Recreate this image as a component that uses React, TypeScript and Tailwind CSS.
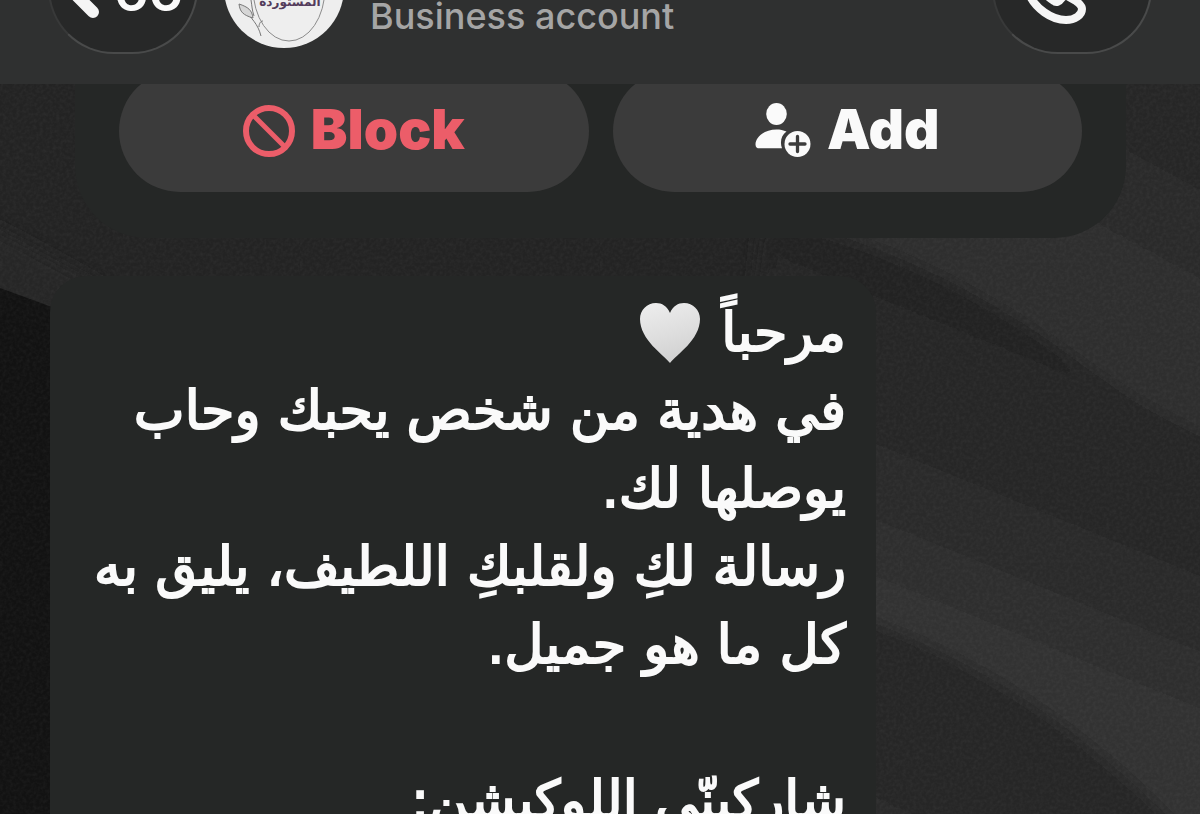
const noise =
  "url(\"data:image/svg+xml,%3Csvg xmlns='http://www.w3.org/2000/svg' width='300' height='300'%3E%3Cfilter id='n'%3E%3CfeTurbulence type='fractalNoise' baseFrequency='.3' numOctaves='2' stitchTiles='stitch'/%3E%3CfeColorMatrix values='0 0 0 0 1 0 0 0 0 1 0 0 0 0 1 .5 0 0 0 -.18'/%3E%3C/filter%3E%3Crect width='300' height='300' filter='url(%23n)'/%3E%3C/svg%3E\")";

function Wallpaper() {
  return (
    <div aria-hidden="true" className="absolute inset-0 -z-10 overflow-hidden">
      <svg className="h-full w-full" viewBox="0 0 1200 814" preserveAspectRatio="none">
        <defs>
          <linearGradient id="fold" gradientUnits="userSpaceOnUse" x1="1070" y1="350" x2="960" y2="620">
            <stop offset="0" stopColor="#242424" />
            <stop offset="0.4" stopColor="#262626" />
            <stop offset="1" stopColor="#303030" />
          </linearGradient>
          <linearGradient id="crest" gradientUnits="userSpaceOnUse" x1="1000" y1="330" x2="1130" y2="90">
            <stop offset="0" stopColor="#2f2f2f" />
            <stop offset="0.6" stopColor="#2c2c2c" />
            <stop offset="1" stopColor="#252525" />
          </linearGradient>
          <linearGradient id="valley" gradientUnits="userSpaceOnUse" x1="1040" y1="690" x2="960" y2="860">
            <stop offset="0" stopColor="#242424" />
            <stop offset="1" stopColor="#292929" />
          </linearGradient>
          <filter id="soft" filterUnits="userSpaceOnUse" x="-100" y="-100" width="1400" height="1050">
            <feGaussianBlur stdDeviation="8" />
          </filter>
        </defs>
        <rect width="1200" height="814" fill="#232323" />
        <g filter="url(#soft)">
          <path d="M-20 220C20 240 60 262 110 290V330H-20Z" fill="#282828" />
          <path d="M760 215C900 245 990 300 1070 355C1130 400 1190 430 1260 460V0H1000Z" fill="url(#crest)" />
          <path d="M760 215C900 245 990 300 1070 355C1130 400 1190 430 1260 460V900H700Z" fill="url(#fold)" />
          <path d="M820 605C960 650 1080 720 1200 850H760Z" fill="url(#valley)" />
        </g>
        <path d="M0 288L60 310V814H0Z" fill="#121212" />
      </svg>
      <div className="absolute inset-0 opacity-15" style={{ backgroundImage: noise }} />
    </div>
  );
}

function BlockIcon() {
  return (
    <svg width="52" height="52" viewBox="0 0 52 52" fill="none" stroke="currentColor" strokeWidth="6" aria-hidden="true">
      <circle cx="26" cy="26" r="23" />
      <path d="M10 10L42 42" strokeWidth="5" />
    </svg>
  );
}

function AddPersonIcon() {
  return (
    <svg width="56" height="56" viewBox="0 0 56 56" fill="currentColor" aria-hidden="true">
      <ellipse cx="21.500" cy="11" rx="10.300" ry="11" />
      <path d="M31.500 28.600C28.500 27.100 25 26.500 21.500 26.500C9 26.500 0.500 34.500 0.500 41.500C0.500 44.500 2 45.300 4.500 45.300H27C24.700 38.600 26.200 32.500 31.500 28.600Z" />
      <circle cx="42.500" cy="41" r="13" />
      <path d="M42.500 33.500V48.500M35 41H50" stroke="#3b3b3b" strokeWidth="3.300" strokeLinecap="round" />
    </svg>
  );
}

const lines = [
  "في هدية من شخص يحبك وحاب",
  "يوصلها لك.",
  "رسالة لكِ ولقلبكِ اللطيف، يليق به",
  "كل ما هو جميل.",
  "",
  "شاركينّي اللوكيشن:",
];

function Heart() {
  return (
    <svg role="img" aria-label="🤍" width="62" height="62" viewBox="0 0 62 62" className="mt-2">
      <defs>
        <linearGradient id="heart" x1="0" y1="0" x2="0.300" y2="1">
          <stop offset="0" stopColor="#eeeeee" />
          <stop offset="0.600" stopColor="#dedede" />
          <stop offset="1" stopColor="#d2d2d2" />
        </linearGradient>
      </defs>
      <path d="M31 61C25 53 1 38 1 17C1 8 8 1 17 1C23 1 28 4 31 11C34 4 39 1 45 1C54 1 61 8 61 17C61 38 37 53 31 61Z" fill="url(#heart)" />
    </svg>
  );
}

export default function App() {
  return (
    <div className="relative isolate h-screen overflow-hidden bg-[#252525] font-['Inter',sans-serif] text-[#fafafa]">
      <Wallpaper />
      <header className="relative z-10 flex h-[84px] items-end overflow-hidden bg-[#2f3030] pr-12 pl-12">
        <button aria-label="Back, 66 chats" className="relative mb-[30px] flex h-[132px] w-[150px] shrink-0 items-end gap-3 rounded-[66px] border-2 border-[#494a4a] border-t-transparent border-l-[#383939] bg-[#272828] pb-[40px] pl-[16px]">
          <svg width="36" height="64" viewBox="0 0 36 64" fill="none" stroke="#f5f5f5" strokeWidth="12" strokeLinecap="round" strokeLinejoin="round" className="mb-[-9px] shrink-0" aria-hidden="true">
            <path d="M27 8L4 32L27 55" />
          </svg>
          <span className="text-[54px] leading-[40px] font-semibold">66</span>
        </button>
        <svg role="img" aria-label="المستوردة" width="120" height="120" viewBox="0 0 120 120" className="mb-9 ml-[26px] shrink-0">
          <circle cx="60" cy="60" r="60" fill="#eeeeee" />
          <ellipse cx="65" cy="60" rx="36" ry="53" fill="none" stroke="#8b8b8b" strokeWidth="1" />
          <path d="M37 108C34 96 28 91 18 79M35 99C35 95 37 93 39 93" fill="none" stroke="#777777" />
          <path d="M29 90C19 87 16 84 15 76C24 79 28 82 29 90Z" fill="#d6d6d6" stroke="#777777" />
          <path d="M30 88C28 82 28 78 27 72" fill="none" stroke="#777777" />
          <text x="66" y="78" textAnchor="middle" fontFamily="DejaVu Sans, sans-serif" fontWeight="700" fontSize="12" fill="#533c5b">المستوردة</text>
        </svg>
        <p className="mb-[52px] ml-[26px] text-[36px] leading-8 font-medium text-[#a5a5a5]">Business account</p>
        <button aria-label="Call" className="mb-[30px] ml-auto flex h-[132px] w-[160px] shrink-0 items-end justify-center rounded-[66px] border-2 border-[#494a4a] border-t-transparent border-l-[#383939] bg-[#272828] pr-8 pb-[27px]">
          <svg width="68" height="68" viewBox="0 0 68 68" fill="none" stroke="#f5f5f5" strokeWidth="8" strokeLinejoin="round" aria-hidden="true">
            <path d="M9 41C14 50 28 63 44 63C53 63 60 58 60 52C60 49 58 47 54 44L47 40C44 38 41 39 39 42C37 45 34 46 32 44C27 41 22 36 19 31C17 28 19 27 21 24C24 22 23 19 21 16L16 8C13 4 9 4 6 8C0 16 3 30 9 41Z" />
          </svg>
        </button>
      </header>
      <main>
        <section className="mr-[74px] -mt-[84px] ml-[75px] rounded-b-[72px] bg-[#252726] px-11 pt-[70px] pb-[46px]">
          <div className="grid grid-cols-2 gap-6 text-[55px] font-black">
            <button className="flex h-[122px] items-center justify-center gap-4 rounded-[61px] bg-[#3b3b3b] text-[#ec5d69]"><BlockIcon /><span className="pb-1">Block</span></button>
            <button className="flex h-[122px] items-center justify-center gap-4 rounded-[61px] bg-[#3b3b3b]"><AddPersonIcon /><span className="pb-1">Add</span></button>
          </div>
        </section>
        <article dir="rtl" lang="ar" className="mt-[38px] mr-auto ml-[50px] w-[826px] max-w-full rounded-t-[36px] bg-[#252726] px-[30px] pt-[18px] pb-10 font-['DejaVu_Sans',sans-serif] text-[54px] leading-[78px] whitespace-nowrap [-webkit-text-stroke:2px_#fafafa]">
          <p className="flex h-[78px] items-start gap-5"><span>مرحباً</span><Heart /></p>
          {lines.map((line, i) => <p key={i} className="h-[78px]">{line}</p>)}
        </article>
      </main>
    </div>
  );
}
